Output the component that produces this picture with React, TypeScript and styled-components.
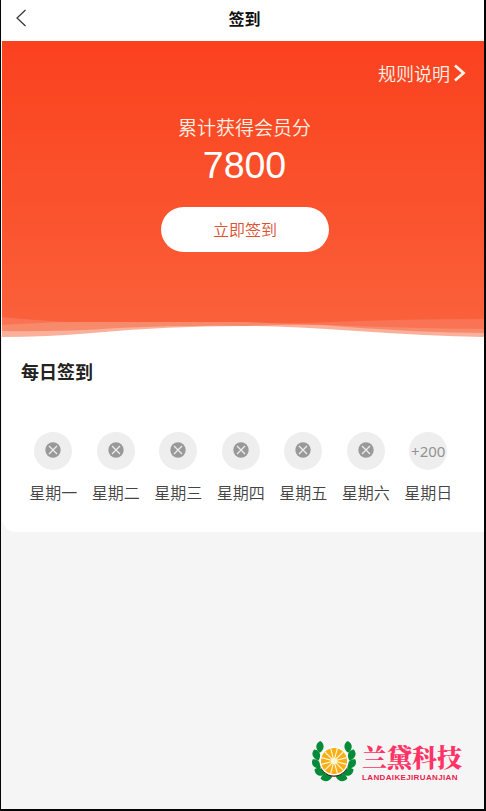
import React from "react";
import styled, { createGlobalStyle } from "styled-components";

const GlobalStyle = createGlobalStyle`
  * { box-sizing: border-box; }
  body { margin: 0; background: #0c0c0c; }
`;

const sans = `"Noto Sans CJK SC", sans-serif`;

const Screen = styled.main`
  width: 486px;
  height: 811px;
  display: flex;
  flex-direction: column;
  border: solid #050505;
  border-width: 0 2px 2px 1px;
  padding-left: 1px;
  background: #f5f5f5;
  font-family: ${sans};
  font-weight: 350;
  overflow: hidden;
`;

const Header = styled.header`
  height: 41px;
  flex: none;
  margin-left: -1px;
  padding: 0 11px 6px 14px;
  display: grid;
  grid-template-columns: 12px 1fr 11px;
  align-items: center;
  background: #fff;
`;

const Title = styled.h1`
  margin: 0;
  text-align: center;
  font-size: 16px;
  line-height: 24px;
  font-weight: 700;
  color: #111;
`;

const BackIcon = styled.svg`
  display: block;
  width: 12px;
  height: 18px;
`;

const Hero = styled.section`
  height: 297px;
  flex: none;
  display: flex;
  flex-direction: column;
  align-items: center;
  background: linear-gradient(#fb4020 0, #fa4823 60px, #fa5530 190px, #fa603a 276px);
  color: #fff;
`;

const Rules = styled.a`
  align-self: flex-end;
  display: flex;
  align-items: center;
  gap: 3px;
  margin: 19px 18px 0 0;
  font-size: 18px;
  line-height: 26px;
  color: #fff3e8;
`;

const PointsLabel = styled.div`
  margin: 27px 0 0 3px;
  font-size: 19px;
  line-height: 28px;
  color: #fff0e4;
`;

const Points = styled.div`
  margin: 2px 0 0 3px;
  font-family: "Liberation Sans", sans-serif;
  font-size: 37.5px;
  line-height: 44px;
`;

const SignButton = styled.button`
  margin: 20px 0 0 4px;
  width: 168px;
  height: 45px;
  flex: none;
  padding: 0 0 1px;
  border: 0;
  border-radius: 23px;
  background: #fff;
  color: #dc5130;
  font-family: ${sans};
  font-weight: 350;
  font-size: 16px;
  line-height: 24px;
`;

const Wave = styled.svg`
  display: block;
  width: 482px;
  height: 22px;
  margin-top: auto;
  flex: none;
`;

const Panel = styled.section`
  height: 194px;
  flex: none;
  padding: 20px 24px 0 19px;
  border-radius: 0 0 0 14px;
  background: #fff;
`;

const PanelTitle = styled.h2`
  margin: 0;
  font-size: 18px;
  line-height: 27px;
  font-weight: 700;
  color: #222;
`;

const Days = styled.div`
  display: grid;
  grid-template-columns: repeat(7, 62.5px);
  margin: 47px 0 0 1px;
`;

const Day = styled.div`
  display: flex;
  flex-direction: column;
  align-items: center;
  font-size: 16px;
  line-height: 24px;
  color: #444;
`;

const Circle = styled.div`
  width: 38px;
  height: 38px;
  margin-bottom: 10px;
  border-radius: 50%;
  display: flex;
  align-items: center;
  justify-content: center;
  background: #eee;
  color: #929292;
  font-family: "Noto Sans", sans-serif;
  font-size: 15px;
  font-weight: 400;
  line-height: 20px;
  white-space: nowrap;
`;

const MissedIcon = styled.svg`
  width: 16px;
  height: 16px;
  margin-bottom: 2px;
`;

const Brand = styled.footer`
  display: flex;
  align-self: flex-end;
  margin: auto 21px 24px 0;
  gap: 4px;
`;

const Emblem = styled.svg`
  width: 47px;
  height: 44px;
`;

const BrandText = styled.div`
  display: flex;
  flex-direction: column;
  width: 101px;
  white-space: nowrap;
`;

const BrandName = styled.div`
  font-family: "Noto Serif CJK SC", "Noto Sans CJK SC", serif;
  font-size: 25px;
  line-height: 30px;
  font-weight: 900;
  color: #ff3366;
`;

const BrandLatin = styled.div`
  margin-top: 2px;
  font-family: "Liberation Sans", sans-serif;
  font-size: 8px;
  line-height: 10px;
  font-weight: 700;
  letter-spacing: 0.36px;
  color: #e71d50;
`;

const days = ["星期一", "星期二", "星期三", "星期四", "星期五", "星期六"];
const leaves = [
  { x: 9, y: 6, r: 68 },
  { x: 5.5, y: 14, r: 42 },
  { x: 5.5, y: 23, r: 25 },
  { x: 9, y: 31, r: 0 },
  { x: 15.5, y: 36.5, r: -35 },
];

function Missed() {
  return (
    <MissedIcon viewBox="0 0 16 16">
      <circle cx="8" cy="8" r="7.7" fill="#999" />
      <path d="M4 4l8 8M12 4l-8 8" stroke="#eee" strokeWidth="1.2" />
    </MissedIcon>
  );
}

function Leaves() {
  return (
    <g fill="#068b38">
      {leaves.map((leaf) => (
        <path
          key={leaf.y}
          d="M-5.5-2.5C-2-5.5 4-4 5.3 2.5C1 5-5 4-5.5-2.5Z"
          transform={`translate(${leaf.x} ${leaf.y}) rotate(${leaf.r})`}
        />
      ))}
    </g>
  );
}

export default function App() {
  return (
    <>
      <GlobalStyle />
      <Screen>
        <Header>
          <BackIcon viewBox="0 0 12 18">
            <path d="M10.500 1L2 9l8.500 8" fill="none" stroke="#333" strokeWidth="1.200" />
          </BackIcon>
          <Title>签到</Title>
        </Header>
        <Hero>
          <Rules>
            规则说明
            <svg width="13" height="18" viewBox="0 0 13 18">
              <path d="M2 1.500L10.500 9l-8.500 7.500" fill="none" stroke="#fff3e8" strokeWidth="2.800" />
            </svg>
          </Rules>
          <PointsLabel>累计获得会员分</PointsLabel>
          <Points>7800</Points>
          <SignButton>立即签到</SignButton>
          <Wave viewBox="0 0 482 22" preserveAspectRatio="none">
            <path d="M0 1Q30 4 65 6H240Q285 8 330 6Q400 3 482 3V22H0Z" fill="#fa7354" />
            <path d="M0 9Q35 7 65 6H240Q280 8 325 9Q400 12 482 13V22H0Z" fill="#f88a6c" />
            <path d="M0 15Q60 16 115 12Q180 9 245 10Q285 8 320 9Q400 16 482 17V22H0Z" fill="#fab09a" />
            <path d="M0 21Q45 21 90 17Q165 10 242 10Q284 10 355 15Q425 20 482 21V22H0Z" fill="#fff" />
          </Wave>
        </Hero>
        <Panel>
          <PanelTitle>每日签到</PanelTitle>
          <Days>
            {days.map((day) => (
              <Day key={day}>
                <Circle><Missed /></Circle>
                {day}
              </Day>
            ))}
            <Day>
              <Circle>+200</Circle>
              星期日
            </Day>
          </Days>
        </Panel>
        <Brand>
          <Emblem viewBox="0 0 47 44">
            <Leaves />
            <g transform="translate(46 0) scale(-1 1)"><Leaves /></g>
            <circle cx="23" cy="21.500" r="14.200" fill="#442016" />
            <circle cx="23" cy="20" r="14.500" fill="#fff" />
            <circle cx="23" cy="20" r="13" fill="#faad15" />
            {Array.from({ length: 12 }, (_, i) => (
              <path
                key={i}
                d="M23 20V7"
                stroke="#fffbe0"
                strokeWidth="1.100"
                transform={`rotate(${i * 30 + 15} 23 20)`}
              />
            ))}
            <circle cx="23" cy="20" r="3" fill="#fff8d6" />
          </Emblem>
          <BrandText>
            <BrandName>兰黛科技</BrandName>
            <BrandLatin>LANDAIKEJIRUANJIAN</BrandLatin>
          </BrandText>
        </Brand>
      </Screen>
    </>
  );
}
